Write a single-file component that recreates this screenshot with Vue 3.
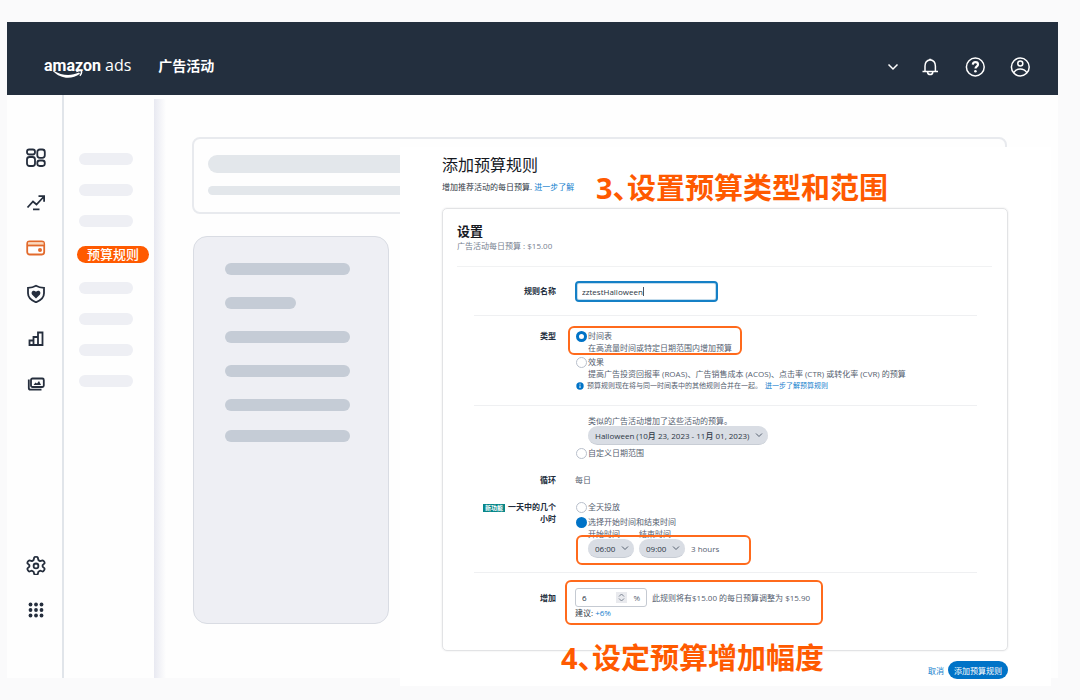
<script setup>
import { ref } from 'vue'

const ruleName = ref('zztestHalloween')
const ruleType = ref('schedule')
const dateMode = ref('')
const dayPart = ref('range')
const increase = ref(6)
const before = [1, 2, 3]
const after = [1, 2, 3, 4]
const lines = ['', 'short', '', '', '', 'last']
const dots = [4.5, 10, 15.5]
</script>

<template>
  <div class="page">
    <div class="window">
      <header class="topbar">
        <a class="logo" href="#" aria-label="amazon ads">
          <span class="logo-main">amazon</span><span class="logo-sub">ads</span>
          <svg class="smile" viewBox="0 0 32 9" width="32" height="9">
            <path d="M.8 1C9 9.400 20 9.600 28 3.700L27 2.600C19 6.400 10 6 1.300.6z" fill="#fff" />
            <path d="M24.300 1.500C26.500.6 29 .5 29.400 1c.4.8-.3 3.200-1.500 4.700" fill="none" stroke="#fff" stroke-width="1.500" />
          </svg>
        </a>
        <a class="section" href="#">广告活动</a>
        <div class="tools">
          <button class="tool small" aria-label="展开">
            <svg viewBox="0 0 14 20" width="14" height="20"><path d="M2.500 7.500 7 12l4.500-4.500" /></svg>
          </button>
          <button class="tool" aria-label="通知">
            <svg viewBox="0 0 20 20" width="20" height="20">
              <path d="M2.500 14.500h15.500M5 14.500V9c0-3 2-5.600 5.200-6.200 3.200.6 5.200 3.200 5.200 6.200v5.500" />
              <path d="M7.500 15c.3 1.700 1.400 2.600 2.700 2.600s2.400-.9 2.700-2.600M9.200 2.400h2" />
            </svg>
          </button>
          <button class="tool" aria-label="帮助">
            <svg viewBox="0 0 20 20" width="20" height="20">
              <circle cx="10.300" cy="10" r="8.900" />
              <path d="M7.800 7.600c.1-1.700 1.200-2.500 2.600-2.500 1.500 0 2.600.9 2.600 2.300 0 1.900-2.500 2-2.500 4.200" stroke-width="2.200" />
              <circle cx="10.400" cy="14.200" r="1.300" class="dot" />
            </svg>
          </button>
          <button class="tool" aria-label="账户">
            <svg viewBox="0 0 20 20" width="20" height="20">
              <circle cx="10.300" cy="10" r="8.900" />
              <circle cx="10.300" cy="6.500" r="2.500" />
              <path d="M3.800 15.600c1.400-2.200 3.700-3.600 6.500-3.600s5.100 1.400 6.500 3.600" />
            </svg>
          </button>
        </div>
      </header>

      <div class="body">
        <nav class="rail" aria-label="主导航">
          <a href="#" aria-label="概览">
            <svg viewBox="0 0 20 20" width="20" height="20">
              <rect x="1" y="1.500" width="8" height="5" rx="2.200" />
              <rect x="11.300" y="1.500" width="7.500" height="8.300" rx="2.500" />
              <rect x="1" y="9" width="8" height="9" rx="2.500" />
              <rect x="11.300" y="12.500" width="7.500" height="5.500" rx="2.400" />
            </svg>
          </a>
          <a href="#" aria-label="趋势">
            <svg viewBox="0 0 20 20" width="20" height="20">
              <path d="M1.500 14.500 7 8.500l3.500 3L17.500 4M12.500 3.200h5.600v5.500M7 16.300h6.500" />
            </svg>
          </a>
          <a href="#" class="active" aria-label="预算">
            <svg viewBox="0 0 20 20" width="20" height="20">
              <rect x="1.200" y="3.500" width="17" height="13" rx="2.500" />
              <path d="M2 4.300h15.500v3H2z" class="tint" />
              <path d="M1.500 7.500h16.500" />
              <circle cx="14" cy="12" r="2" class="fill" />
            </svg>
          </a>
          <a href="#" aria-label="品牌安全">
            <svg viewBox="0 0 20 20" width="20" height="20">
              <path d="M10 2.800c2.500 1.500 5 2 8 2.100v5.400c0 4.200-3 7-8 9-5-2-8-4.800-8-9V4.900c3-.1 5.500-.6 8-2.100z" />
              <path class="fill" d="M10 15.400 6.200 11.800c-2-2.400 1.100-5.600 3.800-3 2.700-2.600 5.800.6 3.800 3z" />
            </svg>
          </a>
          <a href="#" aria-label="报告">
            <svg viewBox="0 0 20 20" width="20" height="20">
              <path d="M3.500 12.500h4V17h-4zM7.500 9H12v8H7.500zM12 4.500h4.500V17H12z" />
            </svg>
          </a>
          <a href="#" aria-label="素材">
            <svg viewBox="0 0 20 20" width="20" height="20">
              <rect x="5" y="5.500" width="12.800" height="8.500" rx="1.500" />
              <path d="M2.800 6.500V15c0 1 .7 1.700 1.700 1.700h11" />
              <path class="fill" d="M7.500 12 9.500 9.500l1.500 1L13 8l2 4z" />
            </svg>
          </a>
          <span class="grow"></span>
          <a href="#" aria-label="设置">
            <svg viewBox="0 0 20 20" width="20" height="20">
              <path d="M8.200 2.500c.2-.9 3.400-.9 3.600 0l.6 2.600 1.700 1 2.500-.8c.9-.2 2.400 2.400 1.900 3.100l-1.900 1.800v1.400l1.900 1.800c.5.7-1 3.300-1.900 3.100l-2.500-.8-1.700 1-.6 2.300c-.2.900-3.400.9-3.600 0l-.6-2.300-1.700-1-2.500.8c-.9.2-2.400-2.400-1.900-3.100l1.900-1.800v-1.400L1.500 8.400c-.5-.7 1-3.300 1.900-3.100l2.500.8 1.700-1z" stroke-linejoin="round" />
              <circle cx="10" cy="10.900" r="2.400" />
            </svg>
          </a>
          <a href="#" aria-label="全部应用">
            <svg viewBox="0 0 20 20" width="20" height="20">
              <template v-for="y in dots" :key="y">
                <circle v-for="x in dots" :key="x" :cx="x" :cy="y" r="1.900" class="fill-only" />
              </template>
            </svg>
          </a>
        </nav>

        <nav class="subnav" aria-label="次级导航">
          <span v-for="n in before" :key="n" class="stub"></span>
          <a class="current" href="#">预算规则</a>
          <span v-for="n in after" :key="n" class="stub"></span>
        </nav>
        <div class="edge"></div>

        <main class="main">
          <div class="ghost-card">
            <span class="ghost-bar"></span>
            <span class="ghost-bar thin"></span>
          </div>
          <div class="ghost-panel">
            <span v-for="(l, i) in lines" :key="i" class="ghost-line" :class="l"></span>
          </div>

          <section class="dialog">
            <h1>添加预算规则</h1>
            <p class="intro">增加推荐活动的每日预算. <a href="#">进一步了解</a></p>
            <p class="callout top">3<span class="mark">、</span>设置预算类型和范围</p>

            <form class="card" @submit.prevent>
              <div class="card-head">
                <h2>设置</h2>
                <p>广告活动每日预算 : $15.00</p>
              </div>

              <div class="group name-group">
                <label class="label" for="rule-name">规则名称</label>
                <div class="name-field">
                  <input id="rule-name" v-model="ruleName" type="text" />
                  <span class="caret"></span>
                </div>
              </div>

              <div class="group type-group">
                <span class="label">类型</span>
                <div class="field">
                  <span class="highlight h-type"></span>
                  <label class="radio"><input v-model="ruleType" type="radio" name="type" value="schedule" />时间表</label>
                  <p class="hint">在高流量时间或特定日期范围内增加预算</p>
                  <label class="radio second"><input v-model="ruleType" type="radio" name="type" value="performance" />效果</label>
                  <p class="hint">提高广告投资回报率 (ROAS)、广告销售成本 (ACOS)、点击率 (CTR) 或转化率 (CVR) 的预算</p>
                  <p class="note">
                    <svg viewBox="0 0 8 8" width="8" height="8"><circle cx="4" cy="4" r="3.700" fill="#0073c7" /><path d="M4 3.500V6M4 1.700v1" stroke="#fff" /></svg>
                    <span>预算规则现在将与同一时间表中的其他规则合并在一起。</span>
                    <a href="#">进一步了解预算规则</a>
                  </p>
                </div>
              </div>

              <div class="group time-group">
                <span class="label"></span>
                <div class="field">
                  <label class="hint" for="event">类似的广告活动增加了这些活动的预算。</label>
                  <div class="pick event">
                    <select id="event"><option>Halloween (10月 23, 2023 - 11月 01, 2023)</option></select>
                    <svg viewBox="0 0 8 8" width="8" height="8"><path d="m1 2.500 3 3 3-3" /></svg>
                  </div>
                  <label class="radio custom"><input v-model="dateMode" type="radio" name="date" value="custom" />自定义日期范围</label>
                </div>

                <span class="label spaced">循环</span>
                <div class="field spaced plain">每日</div>

                <span class="label spaced"><span class="badge">新功能</span>一天中的几个<br />小时</span>
                <div class="field spaced">
                  <label class="radio"><input v-model="dayPart" type="radio" name="part" value="all" />全天投放</label>
                  <label class="radio second solid"><input v-model="dayPart" type="radio" name="part" value="range" />选择开始时间和结束时间</label>
                  <div class="times">
                    <span class="highlight h-time"></span>
                    <div>
                      <label for="from">开始时间</label>
                      <div class="pick">
                        <select id="from"><option>06:00</option></select>
                        <svg viewBox="0 0 8 8" width="8" height="8"><path d="m1 2.500 3 3 3-3" /></svg>
                      </div>
                    </div>
                    <div>
                      <label for="to">结束时间</label>
                      <div class="pick">
                        <select id="to"><option>09:00</option></select>
                        <svg viewBox="0 0 8 8" width="8" height="8"><path d="m1 2.500 3 3 3-3" /></svg>
                      </div>
                    </div>
                    <span class="hours">3 hours</span>
                  </div>
                </div>
              </div>

              <div class="group raise-group">
                <label class="label" for="increase">增加</label>
                <div class="field">
                  <span class="highlight h-raise"></span>
                  <div class="raise">
                    <div class="percent">
                      <input id="increase" v-model="increase" type="number" />
                      <span class="step">
                        <svg viewBox="0 0 9 11" width="9" height="11"><path d="m2 4.500 2.500-2.500L7 4.500m-5 2L4.500 9 7 6.500" /></svg>
                      </span>
                      <span>%</span>
                    </div>
                    <span>此规则将有$15.00 的每日预算调整为 $15.90</span>
                  </div>
                  <p class="tip">建议: <a href="#">+6%</a></p>
                </div>
              </div>
            </form>

            <p class="callout bottom">4<span class="mark">、</span>设定预算增加幅度</p>

            <footer class="actions">
              <button class="cancel" type="button">取消</button>
              <button class="submit" type="button">添加预算规则</button>
            </footer>
          </section>
        </main>
      </div>
    </div>
  </div>
</template>

<style>
body {
  background: #fafafb;
}
</style>

<style scoped>
* {
  box-sizing: border-box;
}
.page {
  display: flex;
  flex-direction: column;
  min-height: 100vh;
  padding: 22px 22px 22px 7px;
  background: #fafafb;
  color: #55606f;
  font: 8px/11px "Open Sans", "Noto Sans CJK SC", sans-serif;
}
h1, h2, p {
  margin: 0;
}
a {
  color: #1480cd;
  text-decoration: none;
}
button {
  padding: 0;
  border: 0;
  background: none;
  font: inherit;
  cursor: pointer;
}
svg {
  display: block;
}
.window {
  flex: 1;
  display: flex;
  flex-direction: column;
  background: #fefefe;
}
.topbar {
  display: flex;
  align-items: center;
  height: 73px;
  padding: 14px 28px 0 37px;
  background: #232f3e;
}
.logo {
  position: relative;
  display: flex;
  align-items: baseline;
  gap: 4px;
  color: #fff;
  line-height: 24px;
}
.logo-main {
  font-family: Roboto, sans-serif;
  font-size: 16px;
  font-weight: 700;
}
.logo-sub {
  font-size: 16px;
}
.smile {
  position: absolute;
  left: 8px;
  top: 17px;
}
.section {
  margin-left: 27px;
  color: #fff;
  font-size: 14px;
  font-weight: 700;
  line-height: 20px;
}
.tools {
  display: flex;
  gap: 25px;
  margin-left: auto;
  padding-top: 2px;
}
.tool svg {
  fill: none;
  stroke: #fff;
  stroke-width: 1.5;
}
.tool.small {
  margin-right: -5px;
}
.tool .dot {
  fill: #fff;
  stroke: none;
}
.body {
  flex: 1;
  display: flex;
}
.rail {
  display: flex;
  flex-direction: column;
  gap: 25px;
  width: 57px;
  padding: 53px 0 58px 19px;
  border-right: 2px solid #e1e5ea;
  flex: none;
}
.rail a {
  color: #252e3d;
}
.rail a.active {
  color: #e26a2c;
}
.rail svg {
  fill: none;
  stroke: currentColor;
  stroke-width: 1.8;
}
.rail .fill {
  fill: currentColor;
  stroke: none;
}
.rail .fill-only {
  fill: currentColor;
  stroke: none;
}
.rail .tint {
  fill: #fbd9bd;
  stroke: none;
}
.grow {
  flex: 1;
}
.subnav {
  flex: none;
  display: flex;
  flex-direction: column;
  align-items: flex-start;
  gap: 19px;
  width: 90px;
  padding: 58px 0 0 13px;
}
.stub {
  width: 54px;
  height: 12px;
  margin-left: 2px;
  border-radius: 6px;
  background: #eeeff4;
}
.current {
  width: 72px;
  border-radius: 9px;
  background: #ff5a00;
  color: #fff;
  font-size: 13px;
  font-weight: 500;
  line-height: 17px;
  text-align: center;
}
.edge {
  flex: none;
  width: 12px;
  margin-top: 4px;
  background: linear-gradient(to right, #e8e9f1, #fefefe);
}
.main {
  position: relative;
  flex: 1;
  min-width: 0;
  padding: 42px 51px 0 26px;
}
.ghost-card {
  display: flex;
  flex-direction: column;
  gap: 13px;
  height: 77px;
  padding: 16px 14px;
  border: 2px solid #e8eaee;
  border-radius: 8px;
}
.ghost-bar {
  flex: none;
  height: 18px;
  border-radius: 9px;
  background: #e3e7eb;
}
.ghost-bar.thin {
  height: 9px;
}
.ghost-panel {
  display: flex;
  flex-direction: column;
  gap: 23px;
  width: 196px;
  height: 388px;
  margin: 22px 0 0 1px;
  padding: 26px 38px 0 31px;
  border: 1px solid #d9dce3;
  border-radius: 14px;
  background: #eeeff4;
}
.ghost-line {
  height: 12px;
  margin-bottom: -1px;
  border-radius: 6px;
  background: #c5ccd6;
}
.ghost-line.short {
  width: 71px;
}
.ghost-line.last {
  margin-top: -3px;
}
.dialog {
  position: absolute;
  top: 52px;
  left: 234px;
  right: 7px;
  padding: 7px 43px 7px 42px;
  background: #fff;
}
h1 {
  color: #16191f;
  font-size: 16px;
  font-weight: 400;
  line-height: 22px;
}
.intro {
  margin-top: 5px;
  color: #303844;
}
.callout {
  position: absolute;
  color: #ff5a00;
  font-size: 29px;
  font-weight: 700;
  line-height: 36px;
  white-space: nowrap;
}
.callout .mark {
  font-feature-settings: "halt";
}
.callout.top {
  left: 196px;
  top: 23px;
}
.callout.bottom {
  left: 161px;
  bottom: 10px;
}
.card {
  margin-top: 16px;
  padding: 0 15px 32px 14px;
  border: 1px solid #e2e3e5;
  border-radius: 5px;
  box-shadow: 0 0 2px #e2e3e5;
}
.card-head {
  height: 58px;
  padding-top: 14px;
  border-bottom: 1px solid #f1f2f3;
}
h2 {
  color: #16191f;
  font-size: 13px;
  font-weight: 700;
  line-height: 17px;
}
.card-head p {
  color: #778190;
}
.group {
  display: grid;
  grid-template-columns: 82px 1fr;
  column-gap: 19px;
  margin: 0 15px 0 17px;
  border-bottom: 1px solid #eff0f2;
}
.label {
  color: #222d3c;
  font-weight: 700;
  line-height: 12px;
  text-align: right;
}
.field {
  position: relative;
}
.name-group {
  align-items: center;
  height: 49px;
}
.name-field {
  position: relative;
  width: 143px;
}
.name-field input {
  display: block;
  width: 100%;
  height: 21px;
  padding: 0 5px;
  border: 2px solid #1580c6;
  border-radius: 4px;
  outline: 0;
  background: #fff;
  box-shadow: inset 0 0 0 1px #c3dcec;
  color: #2c3644;
  font: inherit;
}
.caret {
  position: absolute;
  left: 68px;
  top: 6px;
  width: 1px;
  height: 9px;
  background: #4c5563;
}
.type-group {
  padding: 14px 0;
}
.radio {
  display: flex;
  align-items: center;
  gap: 1px;
  padding-left: 1px;
  line-height: 12px;
}
.radio.second {
  margin-top: 3px;
}
.radio.custom {
  margin-top: 2px;
}
.radio input {
  appearance: none;
  width: 11px;
  height: 11px;
  margin: 0;
  border: 1px solid #b9c0cc;
  border-radius: 50%;
  background: #fff;
}
.radio input:checked {
  border: 3px solid #0073c7;
}
.radio.solid input:checked {
  background: #0073c7;
}
.hint {
  display: block;
  margin-left: 13px;
}
.note {
  display: flex;
  align-items: center;
  gap: 3px;
  margin-top: 1px;
  padding-left: 1px;
  font-size: 7px;
}
.time-group {
  padding: 9px 0 14px;
}
.spaced {
  margin-top: 15px;
}
.plain {
  line-height: 12px;
}
.badge {
  display: inline-block;
  margin-right: 3px;
  padding: 0 2px;
  background: #078688;
  color: #fff;
  font-size: 6px;
  line-height: 8px;
}
.pick {
  position: relative;
  width: 46px;
  color: #2d3745;
}
.pick.event {
  width: 180px;
  margin-left: 13px;
}
.pick select {
  appearance: none;
  display: block;
  width: 100%;
  height: 19px;
  padding: 0 0 0 7px;
  border: 0;
  border-bottom: 1px solid #c8cdd5;
  border-radius: 10px;
  background: #d9dde4;
  color: inherit;
  font: inherit;
  font-weight: 500;
}
.pick svg {
  position: absolute;
  right: 5px;
  top: 5px;
  fill: none;
  stroke: #55606f;
  pointer-events: none;
}
.times {
  position: relative;
  display: flex;
  gap: 5px;
  padding-left: 13px;
}
.times label {
  display: block;
}
.hours {
  margin-left: 1px;
  align-self: flex-end;
  line-height: 19px;
}
.raise-group {
  padding-top: 15px;
  border-bottom: 0;
}
.raise-group .label {
  line-height: 19px;
}
.raise {
  display: flex;
  align-items: center;
  gap: 5px;
}
.percent {
  display: flex;
  align-items: center;
  gap: 6px;
  width: 72px;
  height: 19px;
  padding: 0 6px;
  border: 1px solid #c5cad2;
  border-radius: 3px;
}
.percent input {
  appearance: textfield;
  flex: 1;
  min-width: 0;
  padding: 0;
  border: 0;
  outline: 0;
  background: none;
  color: #222d3c;
  font: inherit;
}
.percent input::-webkit-inner-spin-button {
  display: none;
}
.step {
  padding: 0 1px;
  background: #e9eaee;
}
.step svg {
  fill: none;
  stroke: #7b8492;
}
.tip {
  color: #303844;
}
.highlight {
  position: absolute;
  border: 2px solid #ff6a1c;
  border-radius: 6px;
  pointer-events: none;
}
.h-type {
  left: -7px;
  top: -4px;
  width: 174px;
  height: 29px;
}
.h-time {
  left: 1px;
  top: 7px;
  width: 175px;
  height: 30px;
}
.h-raise {
  left: -10px;
  top: -8px;
  width: 258px;
  height: 45px;
}
.actions {
  display: flex;
  justify-content: flex-end;
  gap: 4px;
  margin-top: 10px;
}
.cancel {
  color: #1480cd;
}
.submit {
  width: 60px;
  height: 18px;
  border-radius: 9px;
  background: #0073c7;
  color: #fff;
}
</style>
